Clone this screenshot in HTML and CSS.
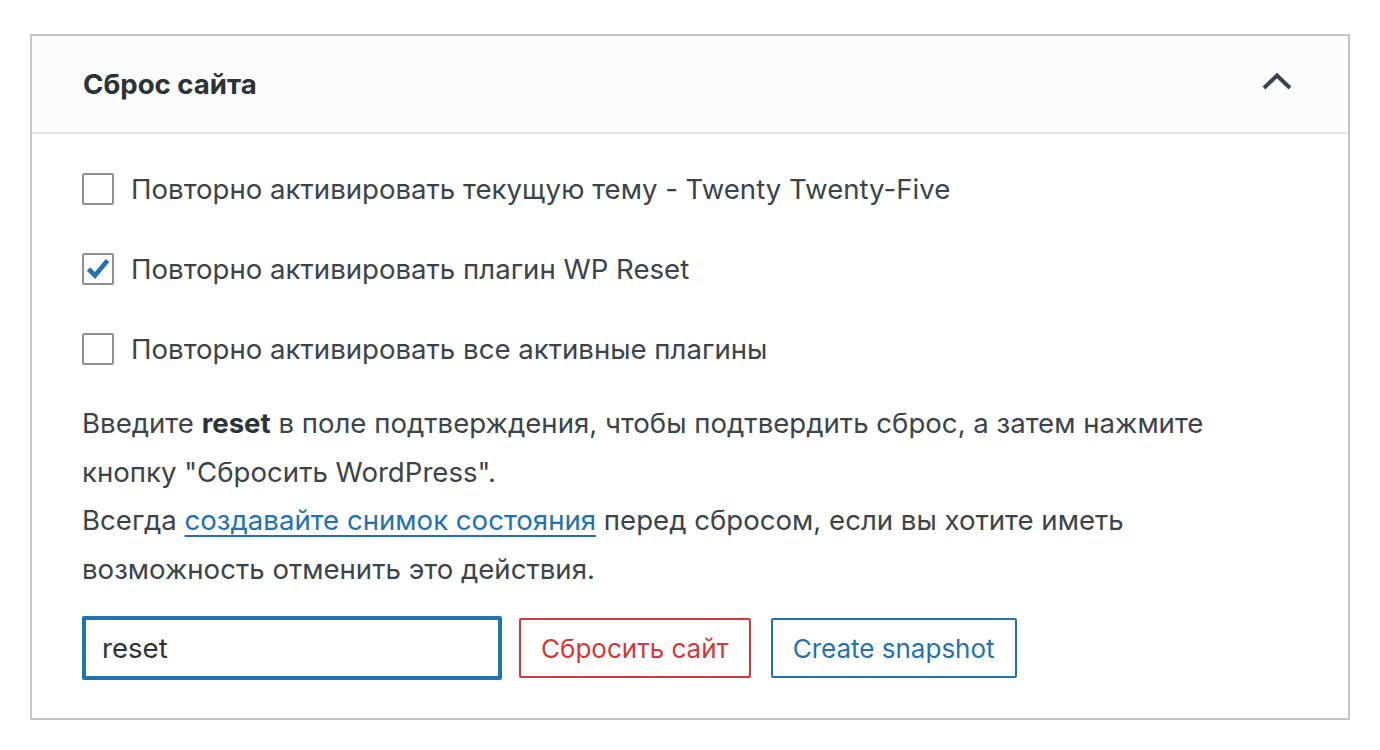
FILE: index.html
```html
<!DOCTYPE html>
<html lang="ru">
<head>
<meta charset="utf-8">
<title>Сброс сайта</title>
<link rel="stylesheet" href="styles.css">
</head>
<body>
<div class="panel">
  <div class="head">
    <h2 class="title">Сброс сайта</h2>
    <svg class="chev" width="30" height="18" viewBox="0 0 30 18"><polyline points="2,16 15,3.5 28,16" fill="none" stroke="#3c434a" stroke-width="4"/></svg>
  </div>
  <div class="body">
    <label class="row"><span class="cb"></span><span>Повторно активировать текущую тему - Twenty Twenty-Five</span></label>
    <label class="row"><span class="cb checked"><svg width="28" height="28" viewBox="0 0 28 28"><path d="M4.5 14 L11 20.5 L23.5 5.5" fill="none" stroke="#2271b1" stroke-width="4.6" stroke-linecap="butt" stroke-linejoin="miter"/></svg></span><span>Повторно активировать плагин WP Reset</span></label>
    <label class="row"><span class="cb"></span><span>Повторно активировать все активные плагины</span></label>
    <p class="text">Введите <b>reset</b> в поле подтверждения, чтобы подтвердить сброс, а затем нажмите кнопку "Сбросить WordPress".<br>Всегда <a href="#">создавайте снимок состояния</a> перед сбросом, если вы хотите иметь возможность отменить это действия.</p>
    <div class="actions">
      <div class="input">reset</div>
      <button class="btn red">Сбросить сайт</button>
      <button class="btn blue">Create snapshot</button>
    </div>
  </div>
</div>
</body>
</html>
```
FILE: styles.css
```css
html, body { margin: 0; padding: 0; background: #fff; }
body { font-family: Inter, "Noto Sans", sans-serif; color: #3c434a; font-size: 27.6px; }
.panel { margin: 34px 0 0 30px; width: 1320px; box-sizing: border-box; border: 2px solid #c3c4c7; }
.head { height: 96px; background: #fcfcfc; border-bottom: 2px solid #e2e4e7; display: flex; align-items: center; justify-content: space-between; padding: 0 56px 0 51px; }
.title { margin: 0; font-size: 27.6px; font-weight: 700; color: #2c3338; }
.chev { display: block; margin-top: -6px; }
.body { padding: 39px 50px 38px 50px; }
.row { display: flex; align-items: center; gap: 17px; height: 32px; margin-bottom: 48px; }
.cb { width: 32px; height: 32px; box-sizing: border-box; border: 2px solid #8c8f94; border-radius: 2px; background: #fff; display: flex; align-items: center; justify-content: center; flex: none; }
.text { margin: -14px 0 23px; line-height: 48.5px; max-width: 1216px; }
.text b { color: #2c3338; }
.text a { color: #2271b1; text-decoration: underline; text-underline-offset: 5px; text-decoration-thickness: 2px; }
.actions { display: flex; align-items: center; }
.input { width: 420px; height: 64px; box-sizing: border-box; border: 4px solid #2271b1; border-radius: 2px; display: flex; align-items: center; padding-left: 16px; color: #2c3338; }
.btn { font: inherit; font-size: 26px; height: 60px; background: #fff; border: 2px solid; border-radius: 2px; padding: 0 20px; cursor: pointer; }
.red { color: #d63638; border-color: #d63638; margin-left: 17px; }
.blue { color: #2271b1; border-color: #2271b1; margin-left: 20px; }
```
